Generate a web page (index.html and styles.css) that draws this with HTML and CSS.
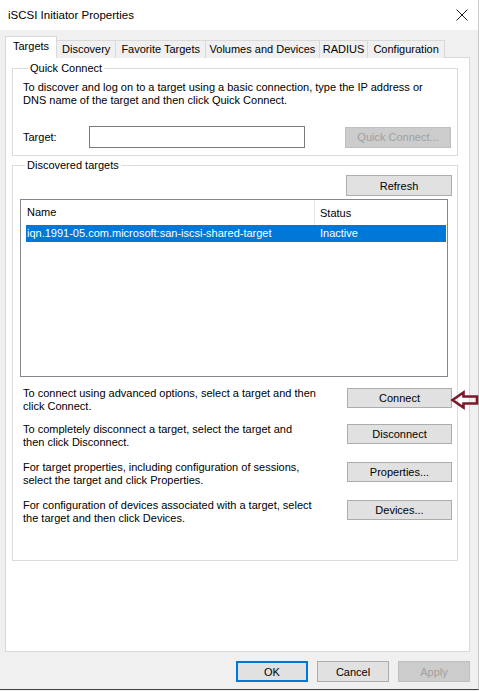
FILE: index.html
```html
<!DOCTYPE html>
<html>
<head>
<meta charset="utf-8">
<title>iSCSI Initiator Properties</title>
<link rel="stylesheet" href="styles.css">
</head>
<body>
<div class="window">
  <div class="titlebar">
    <span class="title">iSCSI Initiator Properties</span>
    <svg class="close" width="12" height="12" viewBox="0 0 12 12"><path d="M0.5 0.5 L11.5 11.5 M11.5 0.5 L0.5 11.5" stroke="#1a1a1a" stroke-width="1" fill="none"/></svg>
  </div>
  <div class="content">
    <div class="tabs">
      <div class="tab active">Targets</div>
      <div class="tab">Discovery</div>
      <div class="tab">Favorite Targets</div>
      <div class="tab tab-narrow">Volumes and Devices</div>
      <div class="tab tab-narrower">RADIUS</div>
      <div class="tab">Configuration</div>
    </div>
    <div class="panel">
      <fieldset class="group quick">
        <legend>Quick Connect</legend>
        <p class="desc">To discover and log on to a target using a basic connection, type the IP address or<br>DNS name of the target and then click Quick Connect.</p>
        <div class="target-row">
          <label class="target-label">Target:</label>
          <div class="textbox"></div>
          <div class="btn disabled">Quick Connect...</div>
        </div>
      </fieldset>
      <fieldset class="group discovered">
        <legend>Discovered targets</legend>
        <div class="refresh-row"><div class="btn">Refresh</div></div>
        <div class="listview">
          <div class="lv-header">
            <div class="col-name">Name</div>
            <div class="col-status">Status</div>
          </div>
          <div class="lv-row selected">
            <div class="col-name">iqn.1991-05.com.microsoft:san-iscsi-shared-target</div>
            <div class="col-status">Inactive</div>
          </div>
        </div>
        <div class="actions">
          <div class="action-row first">
            <p class="action-text">To connect using advanced options, select a target and then<br>click Connect.</p>
            <div class="btn">Connect</div>
            <svg class="pointer" width="30" height="20" viewBox="0 0 30 20"><path d="M2.5 10 L13.5 2.5 L13.5 6.5 L27 6.5 L27 13.5 L13.5 13.5 L13.5 17.5 Z" fill="none" stroke="#7a1a2c" stroke-width="2.6" stroke-linejoin="miter"/></svg>
          </div>
          <div class="action-row">
            <p class="action-text">To completely disconnect a target, select the target and<br>then click Disconnect.</p>
            <div class="btn">Disconnect</div>
          </div>
          <div class="action-row">
            <p class="action-text">For target properties, including configuration of sessions,<br>select the target and click Properties.</p>
            <div class="btn">Properties...</div>
          </div>
          <div class="action-row">
            <p class="action-text">For configuration of devices associated with a target, select<br>the target and then click Devices.</p>
            <div class="btn">Devices...</div>
          </div>
        </div>
      </fieldset>
    </div>
    <div class="footer">
      <div class="btn footer-btn default">OK</div>
      <div class="btn footer-btn">Cancel</div>
      <div class="btn footer-btn disabled">Apply</div>
    </div>
  </div>
</div>
</body>
</html>
```

FILE: styles.css
```css
html, body {
  margin: 0;
  padding: 0;
  background: #f0f0f0;
}
body {
  width: 479px;
  height: 691px;
  overflow: hidden;
  font-family: "Liberation Sans", Arial, sans-serif;
  font-size: 11px;
  color: #000;
}
.window {
  width: 478px;
  height: 689px;
  border-right: 1px solid #c8c8c8;
  border-bottom: 1px solid #444;
  background: #f0f0f0;
  display: flex;
  flex-direction: column;
}
.titlebar {
  height: 30px;
  background: #fff;
  display: flex;
  align-items: center;
  justify-content: space-between;
  padding: 0 10px 0 8px;
  flex: none;
}
.title {
  font-size: 11.5px;
}
.close {
  display: block;
}
.content {
  display: flex;
  flex-direction: column;
  padding: 7px 8px 0 5px;
  flex: 1;
}
.tabs {
  display: flex;
  align-items: flex-end;
  height: 21px;
  position: relative;
  z-index: 1;
}
.tab {
  height: 17px;
  line-height: 17px;
  padding: 0 5px;
  border: 1px solid #d9d9d9;
  border-bottom: none;
  border-left: none;
  background: #f0f0f0;
  white-space: nowrap;
}
.tab.tab-narrow {
  padding: 0 3.5px;
}
.tab.tab-narrower {
  padding: 0 3px;
}
.tab.active {
  height: 21px;
  line-height: 19px;
  background: #fff;
  border-left: 1px solid #d9d9d9;
  padding: 0 7px;
}
.panel {
  background: #fff;
  border: 1px solid #d9d9d9;
  height: 595px;
  box-sizing: border-box;
  padding: 4px 11px 0 6px;
  margin-top: -1px;
}
.group {
  border: 1px solid #dcdcdc;
  margin: 0;
  padding: 0 0 0 10px;
  min-width: 0;
  box-sizing: border-box;
}
.group legend {
  padding: 0 2px;
  margin-left: 5px;
  line-height: 13px;
}
.desc {
  margin: 6px 0 0;
  line-height: 12.5px;
}
.target-row {
  display: flex;
  align-items: center;
  margin-top: 20px;
  height: 22px;
}
.target-label {
  width: 66px;
}
.textbox {
  box-sizing: border-box;
  width: 216px;
  height: 22px;
  border: 1px solid #7a7a7a;
  background: #fff;
}
.btn {
  box-sizing: border-box;
  width: 106px;
  height: 21px;
  border: 1px solid #adadad;
  background: #e1e1e1;
  display: flex;
  align-items: center;
  justify-content: center;
  white-space: nowrap;
}
.btn.disabled {
  background: #cccccc;
  border-color: #bfbfbf;
  color: #a0a0a0;
}
.target-row .btn {
  margin-left: 40px;
}
.quick {
  height: 94px;
  padding-bottom: 0;
}
.discovered {
  margin-top: 3px;
  height: 402px;
  padding-left: 7px;
}
.refresh-row {
  display: flex;
  justify-content: flex-end;
  margin-top: 3px;
  padding-right: 5px;
}
.listview {
  margin-top: 3px;
  width: 428px;
  height: 178px;
  box-sizing: border-box;
  border: 1px solid #828790;
  padding: 0 1px 0 5px;
}
.lv-header, .lv-row {
  display: flex;
}
.lv-header {
  height: 25px;
  align-items: center;
}
.lv-header .col-name {
  width: 287px;
  padding-left: 1px;
  height: 25px;
  line-height: 25px;
  border-right: 1px solid #e5e5e5;
}
.lv-header .col-status {
  padding-left: 5px;
}
.lv-row {
  height: 17px;
  line-height: 17px;
}
.lv-row .col-name {
  width: 288px;
  padding-left: 1px;
}
.lv-row .col-status {
  padding-left: 5px;
  flex: 1;
}
.lv-row.selected {
  background: #0078d7;
  color: #fff;
}
.actions {
  display: flex;
  flex-direction: column;
  gap: 12px;
  margin-top: 10px;
}
.action-row {
  display: flex;
  justify-content: space-between;
  align-items: flex-start;
  padding-right: 5px;
  position: relative;
}
.action-row.first {
  margin-bottom: -2px;
}
.action-text {
  margin: 0;
  line-height: 13px;
  padding-left: 3px;
}
.action-row .btn {
  width: 105px;
  height: 20px;
  margin-top: 1px;
  flex: none;
}
.pointer {
  position: absolute;
  right: -23px;
  top: 3px;
}
.footer {
  display: flex;
  justify-content: flex-end;
  gap: 9px;
  padding-top: 9px;
}
.footer-btn {
  width: 72px;
  height: 21px;
}
.footer-btn.default {
  border: 2px solid #0078d7;
}
```
